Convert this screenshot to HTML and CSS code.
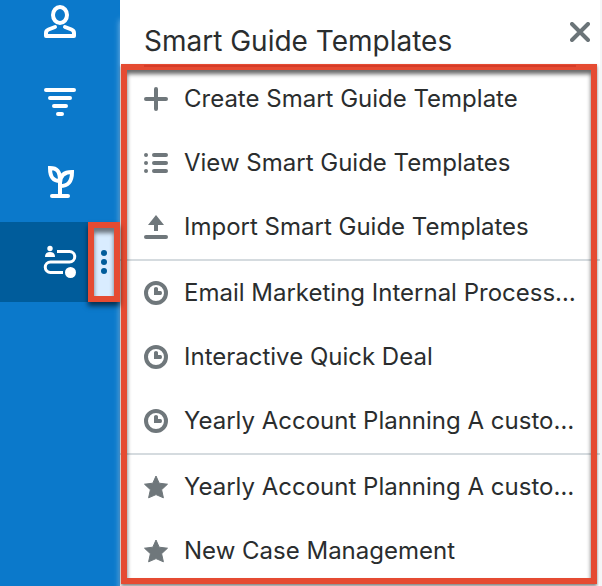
FILE: index.html
```html
<!DOCTYPE html>
<html lang="en">
<head>
    <meta charset="UTF-8">
    <meta name="viewport" content="width=device-width, initial-scale=1.0">
    <title>Smart Guide Templates</title>
    <link rel="stylesheet" href="styles.css">
</head>
<body>
    <svg class="symbols" aria-hidden="true">
        <symbol id="clock" viewBox="0 0 24 24">
            <circle cx="12" cy="12" r="10" fill="none" stroke="currentColor" stroke-width="4"/>
            <path d="M10 7.5Q10 6 12 6T14 7.5V10H16.5Q18 10 18 12T16.5 14H10Z" fill="currentColor"/>
        </symbol>
        <symbol id="star" viewBox="0 0 24 24">
            <path d="M12 1L15.2 8.2 23.5 9.2 17.6 14.7 19.4 22.8 12 19.6 4.6 22.8 6.4 14.7 .5 9.2 8.8 8.2Z" fill="currentColor" stroke="currentColor" stroke-width="1" stroke-linejoin="round"/>
        </symbol>
    </svg>

    <div class="app">
        <nav class="sidebar">
            <a class="nav-item" href="#" aria-label="Contacts">
                <svg width="36" height="36" viewBox="0 0 36 36" fill="none" stroke="currentColor" stroke-width="4" stroke-linecap="round" stroke-linejoin="round">
                    <ellipse cx="18" cy="11" rx="7" ry="8"/>
                    <path d="M13 23L6.500 25.500Q4 26.500 4 29V32H32V29Q32 26.500 29.500 25.500L23 23"/>
                </svg>
            </a>
            <a class="nav-item" href="#" aria-label="Leads">
                <svg width="36" height="36" viewBox="0 0 36 36" fill="none" stroke="currentColor" stroke-width="4" stroke-linecap="round">
                    <path d="M4 6H32M8 14H28M12 22H24M16 30H20"/>
                </svg>
            </a>
            <a class="nav-item" href="#" aria-label="Opportunities">
                <svg width="36" height="36" viewBox="0 0 36 36" fill="none" stroke="currentColor" stroke-width="4">
                    <path d="M18 32V20M18 17C11 17 8 13 8 4C15 4 18 7 18 17Z"/>
                    <path d="M18 24V19C18 12 22 8 30 8C30 18 26 22 18 22"/>
                    <path d="M10 32H26" stroke-linecap="round"/>
                </svg>
            </a>
            <div class="nav-item active">
                <a class="nav-link" href="#" aria-label="Smart Guides">
                    <svg width="36" height="36" viewBox="0 0 36 36" fill="none" stroke="currentColor" stroke-width="3">
                        <path d="M15 7.500H27.500A5.250 5.250 0 0 1 27.500 18H8.500A5.250 5.250 0 0 0 8.500 28.500H21"/>
                        <circle cx="8" cy="4.500" r="2.700" fill="currentColor" stroke="none"/>
                        <path d="M3 13Q3 8 8 8T13 13Z" fill="currentColor" stroke="none"/>
                        <circle cx="28.500" cy="28.500" r="5.500" fill="currentColor" stroke="none"/>
                    </svg>
                </a>
                <button class="more" aria-label="More options">
                    <svg width="8" height="24" viewBox="0 0 8 24" fill="currentColor">
                        <circle cx="4" cy="3" r="3"/>
                        <circle cx="4" cy="12" r="3"/>
                        <circle cx="4" cy="21" r="3"/>
                    </svg>
                </button>
            </div>
        </nav>

        <main class="panel">
            <header class="panel-header">
                <h1>Smart Guide Templates</h1>
                <button class="close" aria-label="Close">
                    <svg width="20" height="20" viewBox="0 0 20 20" fill="none" stroke="currentColor" stroke-width="4" stroke-linecap="round">
                        <path d="M2 2L18 18M18 2L2 18"/>
                    </svg>
                </button>
            </header>

            <ul class="menu">
                <li><a href="#">
                    <svg class="icon" viewBox="0 0 24 24" fill="none" stroke="currentColor" stroke-width="4" stroke-linecap="round"><path d="M12 2V22M2 12H22"/></svg>
                    <span>Create Smart Guide Template</span>
                </a></li>
                <li><a href="#">
                    <svg class="icon" viewBox="0 0 24 24" fill="none" stroke="currentColor" stroke-width="4" stroke-linecap="round"><path d="M2 4H2.010M10 4H22M2 12H2.010M10 12H22M2 20H2.010M10 20H22"/></svg>
                    <span>View Smart Guide Templates</span>
                </a></li>
                <li><a href="#">
                    <svg class="icon" viewBox="0 0 24 24" fill="currentColor"><path d="M12 0L20 10H14V16H10V10H4Z"/><rect y="20" width="24" height="4" rx="2"/></svg>
                    <span>Import Smart Guide Templates</span>
                </a></li>
            </ul>
            <ul class="menu">
                <li><a href="#"><svg class="icon"><use href="#clock"/></svg><span>Email Marketing Internal Process…</span></a></li>
                <li><a href="#"><svg class="icon"><use href="#clock"/></svg><span>Interactive Quick Deal</span></a></li>
                <li><a href="#"><svg class="icon"><use href="#clock"/></svg><span>Yearly Account Planning A custo…</span></a></li>
            </ul>
            <ul class="menu">
                <li><a href="#"><svg class="icon"><use href="#star"/></svg><span>Yearly Account Planning A custo…</span></a></li>
                <li><a href="#"><svg class="icon"><use href="#star"/></svg><span>New Case Management</span></a></li>
            </ul>
            <div class="highlight"></div>
        </main>
    </div>
</body>
</html>
```

FILE: styles.css
```css
* {
    box-sizing: border-box;
}
body {
    margin: 0;
    font-family: Inter, "Liberation Sans", sans-serif;
    color: #2a2d2e;
    background: #fff;
}
a {
    color: inherit;
    text-decoration: none;
}
button {
    padding: 0;
    border: none;
    background: none;
    cursor: pointer;
}
svg {
    display: block;
    flex-shrink: 0;
}
.symbols {
    display: none;
}
.app {
    display: flex;
    height: 100vh;
    overflow: hidden;
}

/* Sidebar, scrolled so the first item is partly cut off */
.sidebar {
    flex: 0 0 120px;
    margin-top: -18px;
    background: #0b79cb;
    color: #fff;
}
.nav-item {
    display: flex;
    justify-content: center;
    align-items: center;
    height: 80px;
}
.nav-item.active {
    background: #005c9b;
}
.nav-link {
    padding-left: 42px;
    flex: 1;
}
.more {
    position: relative;
    z-index: 1;
    display: flex;
    justify-content: center;
    align-items: center;
    width: 32px;
    height: 80px;
    border: 6px solid #e54b32;
    background: #d9ecff;
    color: #005c9b;
    box-shadow: 0 4px 5px rgba(0, 0, 0, 0.6), inset 0 5px 4px rgba(0, 0, 0, 0.5);
}

/* Panel */
.panel {
    position: relative;
    flex: 1;
    min-width: 0;
    border-right: 2px solid #f5f6f7;
    box-shadow: 0 20px 6px rgba(190, 220, 245, 0.7);
    background: #fff;
}
.panel-header {
    display: flex;
    justify-content: space-between;
    height: 67px;
    padding: 0 8px 0 24px;
}
h1 {
    margin: 24px 0 0;
    font-size: 28px;
    font-weight: 400;
    line-height: 34px;
}
.close {
    display: flex;
    justify-content: center;
    align-items: center;
    width: 24px;
    height: 64px;
    color: #6b7478;
}
.menu {
    list-style: none;
    margin: 0;
    padding: 0;
}
.menu + .menu {
    border-top: 2px solid #d5dbdf;
}
.menu a {
    display: flex;
    align-items: center;
    gap: 16px;
    height: 64px;
    padding: 0 16px 0 24px;
    font-size: 24px;
    line-height: 32px;
    white-space: nowrap;
}
.icon {
    width: 24px;
    height: 24px;
    color: #6f777b;
}

/* Frame drawn over the menu */
.highlight {
    position: absolute;
    top: 64px;
    right: 3px;
    bottom: 2px;
    left: 1px;
    border: 6px solid #e54b32;
    box-shadow: 0 2px 3px rgba(0, 0, 0, 0.5), inset 0 4px 4px rgba(0, 0, 0, 0.6);
    pointer-events: none;
}
/* Header rule showing through the frame */
.highlight::before {
    content: "";
    position: absolute;
    top: -5px;
    right: 15px;
    left: 17px;
    height: 2px;
    background: #d63c28;
}
```
